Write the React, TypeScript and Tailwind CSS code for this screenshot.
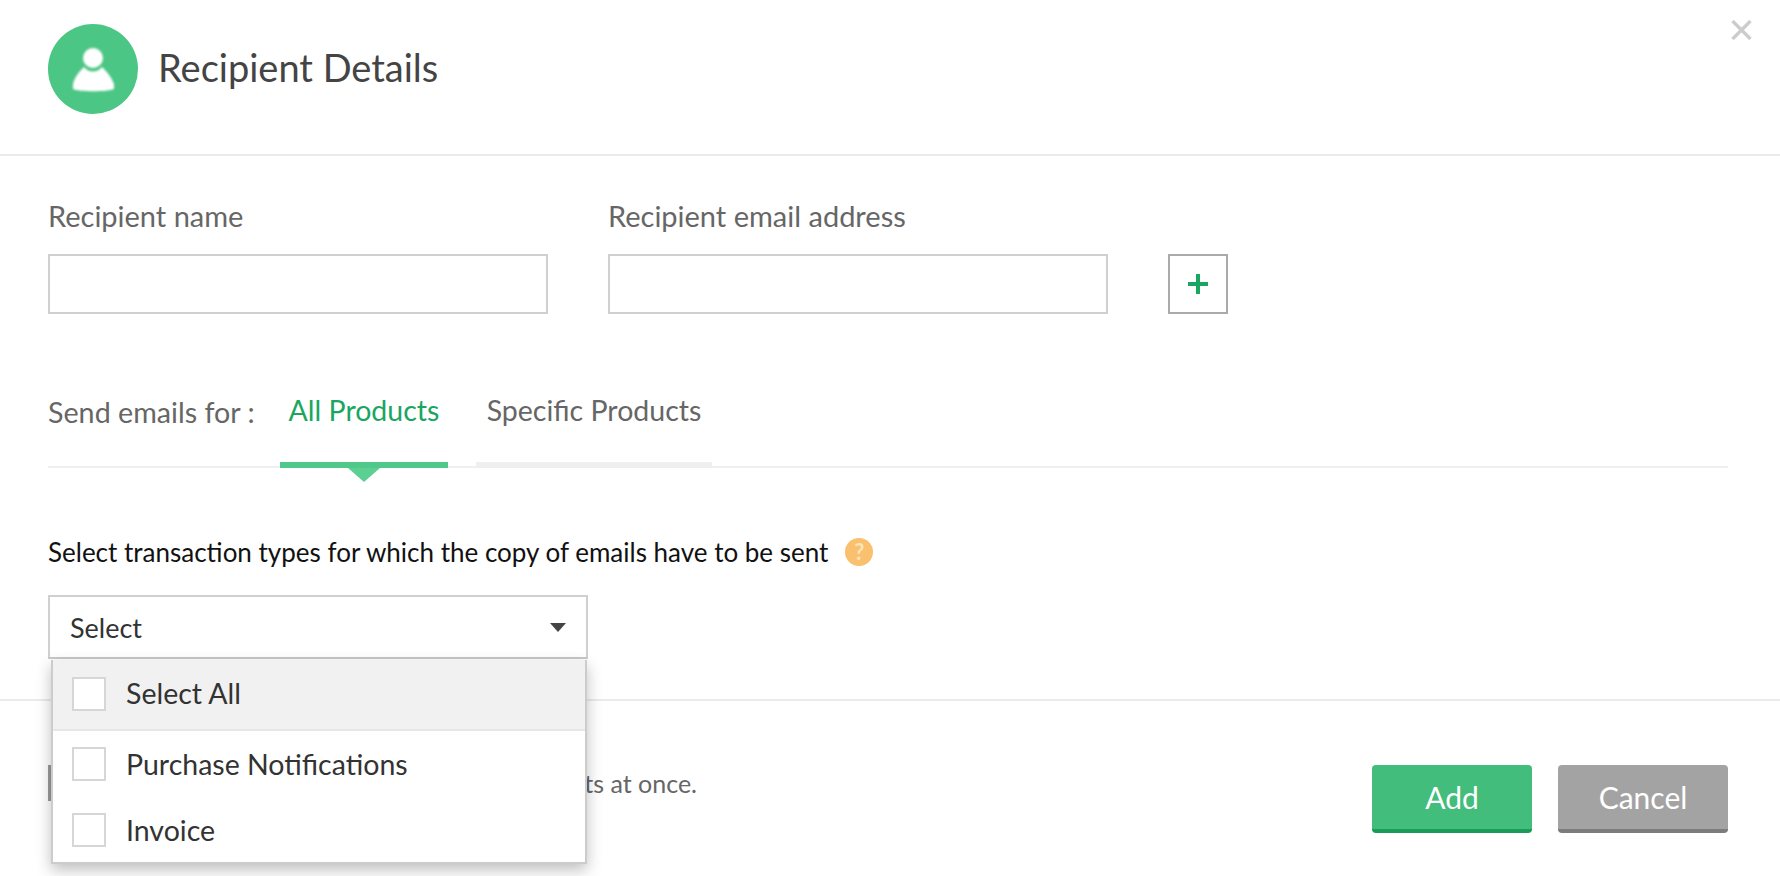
const font = { fontFamily: '"Lato", "Noto Sans", sans-serif' };

function UserBadge() {
  return (
    <svg width="90" height="90" viewBox="0 0 90 90" className="shrink-0">
      <circle cx="45" cy="45" r="45" fill="#4cc685" />
      <g fill="#fff" className="blur-[1px]">
        <circle cx="45" cy="34" r="10" />
        <path d="M25 65V60C27 52 32 47 36 43C38.500 46 41.500 47.500 45 47.500C48.500 47.500 51.500 46 54 43C58 47 63 52 66 60V65C60 68 30 68 25 65Z" />
      </g>
    </svg>
  );
}

function Option({ label, active }: { label: string; active?: boolean }) {
  return (
    <div
      className={
        active
          ? "flex h-[71px] items-center gap-5 border-b-2 border-[#e6e6e6] bg-[#f1f1f1] pb-[2px] pl-[19px]"
          : "flex h-[66px] items-center gap-5 pl-[19px]"
      }
    >
      <span className="h-[34px] w-[34px] shrink-0 border-2 border-[#d6d6d6] bg-white" />
      <span className="text-[28.500px] leading-none text-[#333]">{label}</span>
    </div>
  );
}

export default function App() {
  return (
    <div style={font} className="relative h-[876px] w-[1780px] overflow-hidden bg-white">
      <button className="absolute top-[20px] right-[28px] text-[#cccccc]">
        <svg width="21" height="20" viewBox="0 0 21 20" className="blur-[0.4px]">
          <path d="M1.500 1L19.500 19M19.500 1L1.500 19" stroke="currentColor" strokeWidth="3.400" />
        </svg>
      </button>

      <header className="flex h-[156px] items-center gap-[20px] border-b-2 border-[#ebebeb] pb-[16px] pl-[48px]">
        <UserBadge />
        <h1 className="-mt-[4px] text-[38px] leading-none font-normal text-[#444]">Recipient Details</h1>
      </header>

      <div className="px-[48px] pt-[42px]">
        <div className="flex items-end gap-[60px]">
          <label className="flex w-[500px] flex-col gap-[20px] text-[29px] leading-[36px] text-[#666]">
            Recipient name
            <input className="h-[60px] border-2 border-[#d0d0d0] bg-white" />
          </label>
          <label className="flex w-[500px] flex-col gap-[20px] text-[29px] leading-[36px] text-[#666]">
            Recipient email address
            <input className="h-[60px] border-2 border-[#d0d0d0] bg-white" />
          </label>
          <button className="flex h-[60px] w-[60px] items-center justify-center border-2 border-[#aaaaaa] bg-white">
            <svg width="20" height="20" viewBox="0 0 20 20">
              <path d="M0 10H20M10 0V20" stroke="#1aa661" strokeWidth="4" />
            </svg>
          </button>
        </div>

        <div className="mt-[76px] flex h-[78px] w-[1680px] items-stretch border-b-2 border-[#efefef]">
          <span className="w-[232px] pt-[2px] text-[28.700px] leading-[40px] text-[#666]">Send emails for :</span>
          <div className="relative -mb-[2px] w-[168px] border-b-[6px] border-[#4fc88a] pt-[2px] text-center text-[28.500px] leading-[36px] text-[#1aa661]">
            All Products
            <span className="absolute top-[78px] left-[68px] h-0 w-0 border-x-[16px] border-t-[14px] border-x-transparent border-t-[#5ccf93]" />
          </div>
          <div className="-mb-[2px] ml-[28px] w-[236px] border-b-[6px] border-[#efefef] pt-[2px] text-center text-[28.500px] leading-[36px] whitespace-nowrap text-[#666]">
            Specific Products
          </div>
        </div>

        <div className="mt-[66px] flex items-center gap-[17px]">
          <p className="text-[26px] leading-[36px] text-[#111]">
            Select transaction types for which the copy of emails have to be sent
          </p>
          <span className="flex h-[28px] w-[28px] items-center justify-center rounded-full bg-[#f9c06e] text-[22px] leading-none font-bold text-[#fde3b8]">
            ?
          </span>
        </div>

        <div className="relative mt-[25px] w-[540px]">
          <div className="flex h-[64px] items-center justify-between border-2 border-[#d0d0d0] border-b-[#c8c8c8] px-[20px]">
            <span className="text-[27px] leading-none text-[#333]">Select</span>
            <span className="h-0 w-0 border-x-[8px] border-t-[9px] border-x-transparent border-t-[#444]" />
          </div>
          <div className="absolute top-[65px] left-[3px] z-10 h-[204px] w-[536px] overflow-hidden border-2 border-t-0 border-[#cccccc] bg-white shadow-[0_6px_14px_rgba(0,0,0,0.25)]">
            <Option label="Select All" active />
            <Option label="Purchase Notifications" />
            <Option label="Invoice" />
          </div>
        </div>
      </div>

      <footer className="mt-[40px] flex h-[178px] items-start justify-between border-t-2 border-[#ebebeb] pt-[64px] pr-[52px] pl-[48px]">
        <div className="flex w-[649px] items-center justify-between">
          <span className="h-[36px] w-[36px] bg-[#9a9a9a]" />
          <span className="text-[25px] leading-[36px] text-[#666]">You can add multiple recipients at once.</span>
        </div>
        <div className="flex gap-[26px]">
          <button className="h-[68px] w-[160px] rounded-[4px] border-b-4 border-[#1a9b58] bg-[#42bd7b] text-[30px] leading-none text-white">
            Add
          </button>
          <button className="h-[68px] w-[170px] rounded-[4px] border-b-4 border-[#7c7c7c] bg-[#a3a3a3] text-[30px] leading-none text-white">
            Cancel
          </button>
        </div>
      </footer>
    </div>
  );
}
